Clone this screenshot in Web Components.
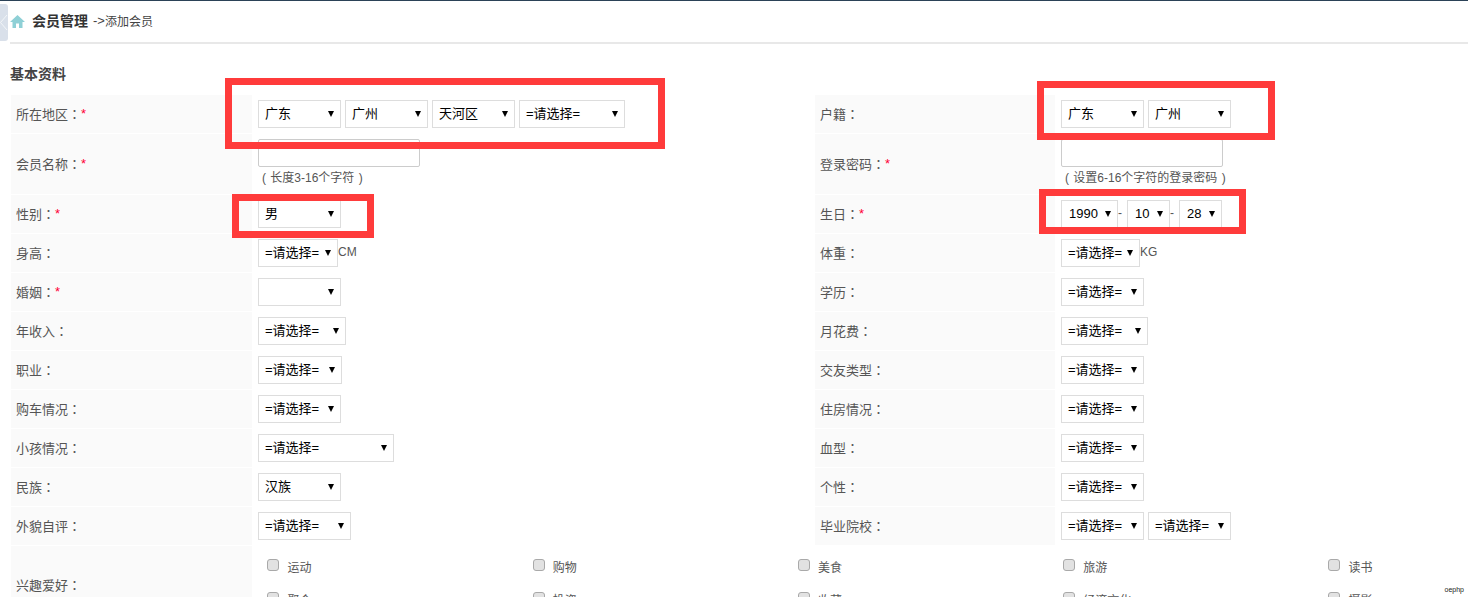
<!DOCTYPE html>
<html lang="zh-CN">

<head>
    <meta charset="utf-8">
    <title>添加会员</title>
    <style>
        html, body {
            margin: 0;
            padding: 0;
            height: 597px;
            overflow: hidden;
            background: #fff;
            font-family: "Liberation Sans", "Noto Sans CJK SC", sans-serif;
        }
        mb-field.right { --label-w: 240px; --ctl-pad: 6px; }
        mb-field.wide { grid-column: 1 / -1; --ctl-pad: 15.4px; --ctl-pad-top: 13px; --ctl-pad-bottom: 12px; }
    </style>
</head>

<body>
    <mb-header title-text="会员管理" sub-text="添加会员"></mb-header>
    <mb-section>基本资料</mb-section>

    <mb-form>
        <mb-field label="所在地区" required>
            <mb-select w="83">广东</mb-select><mb-select w="83">广州</mb-select><mb-select w="83">天河区</mb-select><mb-select w="106">=请选择=</mb-select>
        </mb-field>
        <mb-field class="right" label="户籍">
            <mb-select w="83">广东</mb-select><mb-select w="83">广州</mb-select>
        </mb-field>

        <mb-field label="会员名称" required>
            <mb-input hint="( 长度3-16个字符 )"></mb-input>
        </mb-field>
        <mb-field class="right" label="登录密码" required>
            <mb-input hint="( 设置6-16个字符的登录密码 )"></mb-input>
        </mb-field>

        <mb-field label="性别" required>
            <mb-select w="83">男</mb-select>
        </mb-field>
        <mb-field class="right" label="生日" required>
            <mb-select w="57" pad="8">1990</mb-select><mb-unit>-</mb-unit><mb-select w="43" pad="8">10</mb-select><mb-unit>-</mb-unit><mb-select w="43" pad="8">28</mb-select>
        </mb-field>

        <mb-field label="身高">
            <mb-select w="80">=请选择=</mb-select><mb-unit>CM</mb-unit>
        </mb-field>
        <mb-field class="right" label="体重">
            <mb-select w="79">=请选择=</mb-select><mb-unit>KG</mb-unit>
        </mb-field>

        <mb-field label="婚姻" required><mb-select w="83"></mb-select></mb-field>
        <mb-field class="right" label="学历"><mb-select w="83">=请选择=</mb-select></mb-field>

        <mb-field label="年收入"><mb-select w="88">=请选择=</mb-select></mb-field>
        <mb-field class="right" label="月花费"><mb-select w="87">=请选择=</mb-select></mb-field>

        <mb-field label="职业"><mb-select w="84">=请选择=</mb-select></mb-field>
        <mb-field class="right" label="交友类型"><mb-select w="83">=请选择=</mb-select></mb-field>

        <mb-field label="购车情况"><mb-select w="83">=请选择=</mb-select></mb-field>
        <mb-field class="right" label="住房情况"><mb-select w="83">=请选择=</mb-select></mb-field>

        <mb-field label="小孩情况"><mb-select w="136">=请选择=</mb-select></mb-field>
        <mb-field class="right" label="血型"><mb-select w="83">=请选择=</mb-select></mb-field>

        <mb-field label="民族"><mb-select w="83">汉族</mb-select></mb-field>
        <mb-field class="right" label="个性"><mb-select w="83">=请选择=</mb-select></mb-field>

        <mb-field label="外貌自评"><mb-select w="93">=请选择=</mb-select></mb-field>
        <mb-field class="right" label="毕业院校">
            <mb-select w="83">=请选择=</mb-select><mb-select w="83">=请选择=</mb-select>
        </mb-field>

        <mb-field class="wide" label="兴趣爱好">
            <mb-checks>
                <mb-check>运动</mb-check><mb-check>购物</mb-check><mb-check>美食</mb-check><mb-check>旅游</mb-check><mb-check>读书</mb-check>
                <mb-check>聚会</mb-check><mb-check>投资</mb-check><mb-check>收藏</mb-check><mb-check>经济文化</mb-check><mb-check>摄影</mb-check>
            </mb-checks>
        </mb-field>
    </mb-form>

    <!-- red annotation frames drawn over the form -->
    <mb-mark x="225" y="78" w="440" h="71"></mb-mark>
    <mb-mark x="232" y="194" w="142" h="44"></mb-mark>
    <mb-mark x="1037" y="81" w="238" h="59"></mb-mark>
    <mb-mark x="1039" y="189" w="207" h="45"></mb-mark>

    <mb-stamp>oephp</mb-stamp>

    <template id="header-tpl">
        <style>
            :host {
                display: block;
                position: relative;
                border-top: 1px solid #2b4257;
            }
            .bar {
                display: flex;
                align-items: center;
                height: 41px;
                margin-left: 10px;
            }
            .line {
                height: 2px;
                margin-left: 10px;
                background: #e8e8e8;
            }
            svg.home { width: 15px; height: 13px; margin-right: 7px; }
            b { font-size: 14px; color: #333; margin: 0 5px 3px 0; }
            span { font-size: 12px; color: #444; margin-bottom: 3px; }
            .arrow { font-size: 13px; }
            .handle {
                position: absolute;
                left: 0;
                top: 3px;
                width: 8px;
                height: 37px;
                background: #d9e0ea;
                border-radius: 0 3px 3px 0;
            }
            .handle svg { display: block; width: 8px; height: 37px; }
        </style>
        <div class="handle">
            <svg viewBox="0 0 8 37"><path d="M7 11 L0.5 18.5 L7 26" fill="none" stroke="#f2f5f8" stroke-width="1"/></svg>
        </div>
        <div class="bar">
            <svg class="home" viewBox="0 0 15 13"><path d="M7.5 0 L15 7 H12.5 V13 H9 V8.5 H6 V13 H2.5 V7 H0 Z" fill="#8fd0d6"/></svg>
            <b id="t"></b><span class="arrow">-&gt;</span><span id="s"></span>
        </div>
        <div class="line"></div>
    </template>

    <template id="section-tpl">
        <style>
            :host {
                display: block;
                padding: 20px 0 11px 10px;
                font-size: 14px;
                line-height: 20px;
                font-weight: bold;
                color: #444;
            }
        </style>
        <slot></slot>
    </template>

    <template id="form-tpl">
        <style>
            :host {
                display: grid;
                grid-template-columns: 804px 1fr;
                row-gap: 1px;
                padding-left: 11px;
            }
        </style>
        <slot></slot>
    </template>

    <template id="field-tpl">
        <style>
            :host {
                display: grid;
                grid-template-columns: var(--label-w, 241px) 1fr;
                font-size: 13px;
                color: #555;
            }
            .label {
                display: flex;
                align-items: center;
                padding: 0 0 2px 5px;
                background: #fafafa;
            }
            .label i { font-style: normal; color: #f03; }
            /* the TC face has its full-width colon centred in the box */
            .colon { font-family: "Noto Sans CJK TC", sans-serif; }
            .ctl {
                display: flex;
                gap: 4px;
                align-items: flex-start;
                padding: var(--ctl-pad-top, 5px) 0 var(--ctl-pad-bottom, 5px) var(--ctl-pad, 6px);
            }
        </style>
        <div class="label"><span id="l"></span><span class="colon">：</span><i id="r"></i></div>
        <div class="ctl"><slot></slot></div>
    </template>

    <template id="select-tpl">
        <style>
            :host {
                display: block;
                position: relative;
                box-sizing: border-box;
                height: 28px;
                border: 1px solid #ddd;
                background: #fff;
                font-size: 13px;
                line-height: 26px;
                color: #000;
                white-space: nowrap;
            }
            svg {
                position: absolute;
                right: 6px;
                top: 10px;
                width: 6px;
                height: 6px;
            }
        </style>
        <slot></slot>
        <svg viewBox="0 0 6 6"><path d="M0 0 H6 L3 6 Z" fill="#000"/></svg>
    </template>

    <template id="unit-tpl">
        <style>
            :host {
                display: block;
                margin: 0 1px 0 -4px;
                font-size: 12px;
                line-height: 26px;
                color: #555;
            }
        </style>
        <slot></slot>
    </template>

    <template id="input-tpl">
        <style>
            :host { display: block; }
            input {
                display: block;
                box-sizing: border-box;
                width: 162px;
                height: 28px;
                margin: 0;
                border: 1px solid #ccc;
                border-radius: 2px;
                background: #fff;
            }
            div {
                height: 22px;
                padding: 0 0 0 4px;
                font-size: 12px;
                line-height: 22px;
                word-spacing: 1px;
                color: #555;
                white-space: nowrap;
            }
        </style>
        <input type="text">
        <div id="h"></div>
    </template>

    <template id="checks-tpl">
        <style>
            :host {
                display: grid;
                grid-template-columns: repeat(4, 265.25px) 1fr;
                row-gap: 13px;
            }
        </style>
        <slot></slot>
    </template>

    <template id="check-tpl">
        <style>
            :host {
                display: flex;
                height: 20px;
                font-size: 12px;
                line-height: 18px;
                color: #555;
            }
            input {
                appearance: none;
                box-sizing: border-box;
                width: 12px;
                height: 12px;
                margin: 0 8px 0 0;
                border: 1px solid #a9a9a9;
                border-radius: 3px;
                background: #e2e2e2;
            }
        </style>
        <input type="checkbox"><slot></slot>
    </template>

    <template id="mark-tpl">
        <style>
            :host {
                display: block;
                position: absolute;
                box-sizing: border-box;
                border: 7px solid #ff3b3b;
            }
        </style>
    </template>

    <template id="stamp-tpl">
        <style>
            :host {
                position: absolute;
                right: 4px;
                top: 586px;
                font-size: 7px;
                line-height: 8px;
                color: #222;
            }
        </style>
        <slot></slot>
    </template>
</body>

<script>
    function stamp(el, id) {
        const root = el.attachShadow({ mode: "open" })
        root.appendChild(document.querySelector(id).content.cloneNode(true))
        return root
    }

    // elements that are only a template and a slot
    const plain = {
        "mb-section": "#section-tpl",
        "mb-form": "#form-tpl",
        "mb-unit": "#unit-tpl",
        "mb-checks": "#checks-tpl",
        "mb-check": "#check-tpl",
        "mb-stamp": "#stamp-tpl",
    }
    for (const name in plain) {
        customElements.define(name, class extends HTMLElement {
            constructor() {
                super()
                stamp(this, plain[name])
            }
        })
    }

    customElements.define("mb-header", class extends HTMLElement {
        connectedCallback() {
            if (this.shadowRoot) return
            const root = stamp(this, "#header-tpl")
            root.querySelector("#t").textContent = this.getAttribute("title-text")
            root.querySelector("#s").textContent = this.getAttribute("sub-text")
        }
    })

    customElements.define("mb-field", class extends HTMLElement {
        connectedCallback() {
            if (this.shadowRoot) return
            const root = stamp(this, "#field-tpl")
            root.querySelector("#l").textContent = this.getAttribute("label")
            if (this.hasAttribute("required")) root.querySelector("#r").textContent = "*"
        }
    })

    customElements.define("mb-select", class extends HTMLElement {
        connectedCallback() {
            if (this.shadowRoot) return
            stamp(this, "#select-tpl")
            this.style.width = this.getAttribute("w") + "px"
            this.style.paddingLeft = (this.getAttribute("pad") || 7) - 1 + "px"
        }
    })

    customElements.define("mb-input", class extends HTMLElement {
        connectedCallback() {
            if (this.shadowRoot) return
            const root = stamp(this, "#input-tpl")
            root.querySelector("#h").textContent = this.getAttribute("hint")
        }
    })

    customElements.define("mb-mark", class extends HTMLElement {
        connectedCallback() {
            if (this.shadowRoot) return
            stamp(this, "#mark-tpl")
            this.style.left = this.getAttribute("x") + "px"
            this.style.top = this.getAttribute("y") + "px"
            this.style.width = this.getAttribute("w") + "px"
            this.style.height = this.getAttribute("h") + "px"
        }
    })
</script>

</html>
